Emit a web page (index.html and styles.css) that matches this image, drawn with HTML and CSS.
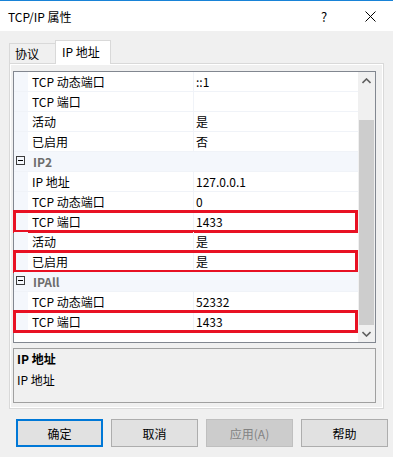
FILE: index.html
```html
<!DOCTYPE html>
<html lang="zh-CN">
<head>
    <meta charset="UTF-8">
    <title>TCP/IP 属性</title>
    <link rel="stylesheet" href="styles.css">
</head>
<body>
    <div class="titlebar">
        <span class="title">TCP/IP 属性</span>
        <span class="tb-btn">?</span>
        <span class="tb-btn">
            <svg width="11" height="11" viewBox="0 0 11 11"><path d="M0.5 0.5L10.5 10.5M10.5 0.5L0.5 10.5" stroke="#000" stroke-width="1"/></svg>
        </span>
    </div>

    <div class="tabs">
        <div class="tab">协议</div>
        <div class="tab active">IP 地址</div>
    </div>

    <div class="page">
        <div class="grid">
            <div class="rows">
                <div class="row"><span class="gut"></span><span class="name">TCP 动态端口</span><span class="val">::1</span></div>
                <div class="row"><span class="gut"></span><span class="name">TCP 端口</span><span class="val"></span></div>
                <div class="row"><span class="gut"></span><span class="name">活动</span><span class="val">是</span></div>
                <div class="row"><span class="gut"></span><span class="name">已启用</span><span class="val">否</span></div>
                <div class="row cat"><span class="gut"><i class="minus"></i></span><span class="name">IP2</span></div>
                <div class="row"><span class="gut"></span><span class="name">IP 地址</span><span class="val">127.0.0.1</span></div>
                <div class="row"><span class="gut"></span><span class="name">TCP 动态端口</span><span class="val">0</span></div>
                <div class="row mark"><span class="gut"></span><span class="name">TCP 端口</span><span class="val">1433</span></div>
                <div class="row"><span class="gut"></span><span class="name">活动</span><span class="val">是</span></div>
                <div class="row mark"><span class="gut"></span><span class="name">已启用</span><span class="val">是</span></div>
                <div class="row cat"><span class="gut"><i class="minus"></i></span><span class="name">IPAll</span></div>
                <div class="row"><span class="gut"></span><span class="name">TCP 动态端口</span><span class="val">52332</span></div>
                <div class="row mark"><span class="gut"></span><span class="name">TCP 端口</span><span class="val">1433</span></div>
            </div>
            <div class="scroll">
                <div class="arrow">
                    <svg width="9" height="6" viewBox="0 0 9 6"><path d="M0.5 5L4.5 1L8.5 5" fill="none" stroke="#606060" stroke-width="1.6"/></svg>
                </div>
                <div class="track"><div class="thumb"></div></div>
                <div class="arrow">
                    <svg width="9" height="6" viewBox="0 0 9 6"><path d="M0.5 1L4.5 5L8.5 1" fill="none" stroke="#606060" stroke-width="1.6"/></svg>
                </div>
            </div>
        </div>

        <div class="desc">
            <div class="desc-title">IP 地址</div>
            <div class="desc-text">IP 地址</div>
        </div>
    </div>

    <div class="buttons">
        <button class="btn default">确定</button>
        <button class="btn">取消</button>
        <button class="btn" disabled>应用(A)</button>
        <button class="btn">帮助</button>
    </div>
</body>
</html>
```

FILE: styles.css
```css
body {
    margin: 0;
    width: 393px;
    height: 457px;
    overflow: hidden;
    background: #f0f0f0;
    font-family: "Noto Sans CJK SC", sans-serif;
    font-size: 12px;
    color: #000;
}
.titlebar {
    height: 30px;
    border-top: 1px solid #1883d7;
    background: #fff;
    display: flex;
    align-items: center;
}
.title {
    flex: 1;
    padding-left: 8px;
}
.tb-btn {
    width: 46px;
    height: 30px;
    display: flex;
    align-items: center;
    justify-content: center;
    font-size: 13px;
}
.tabs {
    display: flex;
    align-items: flex-end;
    height: 23px;
    margin-top: 9px;
    padding-left: 9px;
    position: relative;
    z-index: 1;
}
.tab {
    box-sizing: border-box;
    width: 47px;
    height: 20px;
    border: 1px solid #d9d9d9;
    border-bottom: none;
    padding-left: 5px;
    line-height: 19px;
    background: #f0f0f0;
}
.tab.active {
    width: 56px;
    height: 24px;
    margin-left: -1px;
    margin-bottom: -1px;
    padding-left: 6px;
    line-height: 22px;
    background: #fff;
}
.page {
    box-sizing: border-box;
    height: 346px;
    margin: 0 9px;
    border: 1px solid #d9d9d9;
    background: #f0f0f0;
    box-shadow: inset 0 0 0 1px #fff;
    padding: 7px 7px 0 3px;
}
.grid {
    display: flex;
    height: 270px;
    border: 1px solid #828790;
    background: #fff;
}
.rows {
    flex: 1;
}
.row {
    position: relative;
    display: flex;
    height: 19px;
    border-bottom: 1px solid #f0f3f8;
    line-height: 19px;
}
.gut {
    width: 14px;
    background: #f4f7fc;
    display: flex;
    align-items: center;
}
.name {
    box-sizing: border-box;
    width: 166px;
    padding-left: 4px;
    border-right: 1px solid #f0f3f8;
}
.val {
    flex: 1;
    padding-left: 2px;
}
.row.cat {
    background: #f4f7fc;
}
.row.cat .name {
    border-right: none;
    padding-left: 5px;
    font-weight: bold;
    color: #6d6d6d;
}
.minus {
    box-sizing: border-box;
    width: 9px;
    height: 9px;
    margin: -3px 0 0 2px;
    border: 1px solid #3c3c3c;
    position: relative;
}
.minus::after {
    content: "";
    position: absolute;
    left: 1px;
    right: 1px;
    top: 3px;
    height: 1px;
    background: #000;
}
.row.mark::after {
    content: "";
    position: absolute;
    left: -1px;
    right: 0;
    top: -2px;
    bottom: -2px;
    border: 3px solid #e81123;
}
.scroll {
    width: 17px;
    background: #f0f0f0;
    display: flex;
    flex-direction: column;
}
.arrow {
    height: 17px;
    display: flex;
    align-items: center;
    justify-content: center;
}
.track {
    flex: 1;
    display: flex;
    flex-direction: column;
    padding: 31px 1px 0 1px;
}
.thumb {
    flex: 1;
    background: #cdcdcd;
}
.desc {
    box-sizing: border-box;
    height: 55px;
    margin-top: 5px;
    border: 1px solid #a0a0a0;
    background: #f0f0f0;
    padding: 2px 3px;
    line-height: 16px;
}
.desc-title {
    font-weight: bold;
}
.desc-text {
    margin-top: 5px;
}
.buttons {
    display: flex;
    gap: 8px;
    padding: 10px 0 0 16px;
}
.btn {
    box-sizing: border-box;
    width: 87px;
    height: 28px;
    border: 1px solid #adadad;
    background: #e1e1e1;
    font-family: inherit;
    font-size: 12px;
    color: #000;
    padding: 0;
}
.btn.default {
    border: 2px solid #0078d7;
}
.btn:disabled {
    background: #cccccc;
    border-color: #bfbfbf;
    color: #838383;
}
```
